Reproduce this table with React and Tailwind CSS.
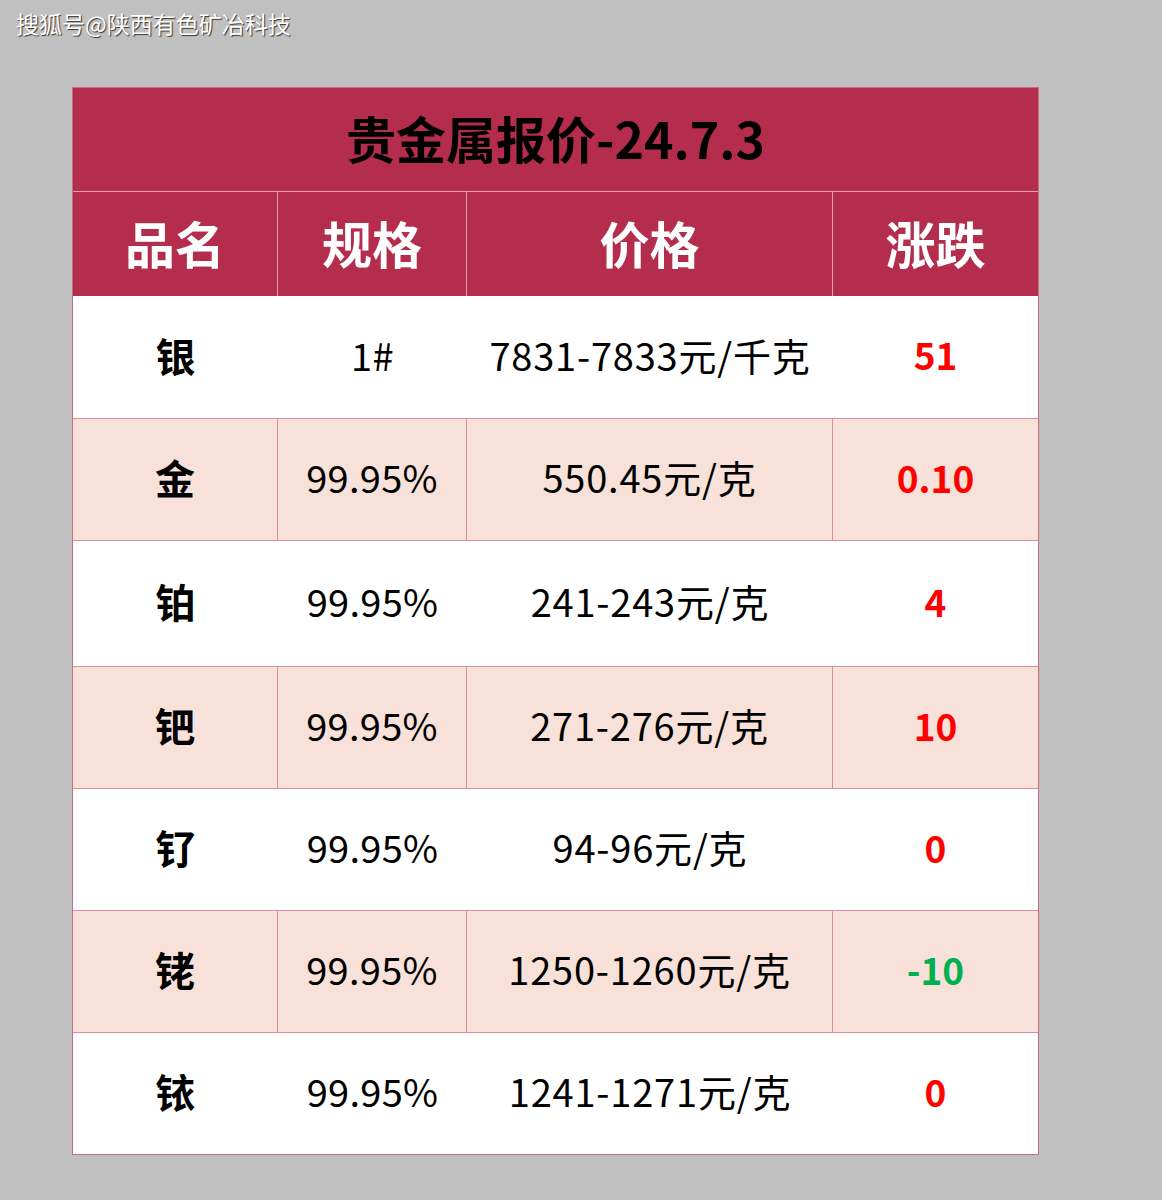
import React from "react";

const rows = [
  { name: "银", spec: "1#", price: "7831-7833元/千克", change: "51", up: true, h: "h-[122px]" },
  { name: "金", spec: "99.95%", price: "550.45元/克", change: "0.10", up: true, h: "h-[122px]" },
  { name: "铂", spec: "99.95%", price: "241-243元/克", change: "4", up: true, h: "h-[126px]" },
  { name: "钯", spec: "99.95%", price: "271-276元/克", change: "10", up: true, h: "h-[122px]" },
  { name: "钌", spec: "99.95%", price: "94-96元/克", change: "0", up: true, h: "h-[122px]" },
  { name: "铑", spec: "99.95%", price: "1250-1260元/克", change: "-10", up: false, h: "h-[122px]" },
  { name: "铱", spec: "99.95%", price: "1241-1271元/克", change: "0", up: true, h: "h-[122px]" },
];

const font = { fontFamily: '"Noto Sans CJK SC", "Noto Sans", sans-serif' };

export default function App() {
  return (
    <div className="w-[1162px] h-[1200px] bg-[#c0c0c0] relative" style={font}>
      {/* 水印 */}
      <div className="absolute left-[16px] top-[7px] text-[23px] leading-[32px] text-white [text-shadow:1px_1px_1px_#333]">
        搜狐号@陕西有色矿冶科技
      </div>

      <div className="pt-[87px] pl-[72px]">
        <div className="w-[967px] border border-[#c86a82] bg-white">
          {/* 标题 */}
          <div className="h-[104px] bg-[#b52d4d] flex items-center justify-center border-b border-[#eea0b0]">
            <span className="text-[50px] font-bold text-black leading-none -mt-[6px]">贵金属报价-24.7.3</span>
          </div>

          {/* 表头 */}
          <div className="h-[104px] bg-[#b52d4d] flex text-white font-bold text-[50px] leading-none">
            <div className="w-[205px] flex items-center justify-center pb-[4px] border-r border-[#eea0b0]">品名</div>
            <div className="w-[189px] flex items-center justify-center pb-[4px] border-r border-[#eea0b0]">规格</div>
            <div className="w-[366px] flex items-center justify-center pb-[4px] border-r border-[#eea0b0]">价格</div>
            <div className="flex-1 flex items-center justify-center pb-[4px]">涨跌</div>
          </div>

          {rows.map((r, i) => {
            const pink = i % 2 === 1;
            const cell = pink ? "border-r border-[#dc8d9d]" : "";
            return (
              <div
                key={i}
                className={`flex ${r.h} text-black leading-none ${pink ? "bg-[#f7e1d8]" : "bg-white"} ${i > 0 ? "border-t border-[#dc8d9d]" : ""}`}
              >
                <div className={`w-[205px] flex items-center justify-center pb-[5px] font-bold text-[40px] ${cell}`}>{r.name}</div>
                <div className={`w-[189px] flex items-center justify-center pb-[5px] text-[38px] tracking-[0.3px] ${cell}`}>{r.spec}</div>
                <div className={`w-[366px] flex items-center justify-center pb-[5px] text-[38px] tracking-[0.8px] ${cell}`}>{r.price}</div>
                <div className={`flex-1 flex items-center justify-center pb-[5px] font-bold text-[37px] ${r.up ? "text-[#ff0000]" : "text-[#00b050]"}`}>
                  {r.change}
                </div>
              </div>
            );
          })}
        </div>
      </div>
    </div>
  );
}
